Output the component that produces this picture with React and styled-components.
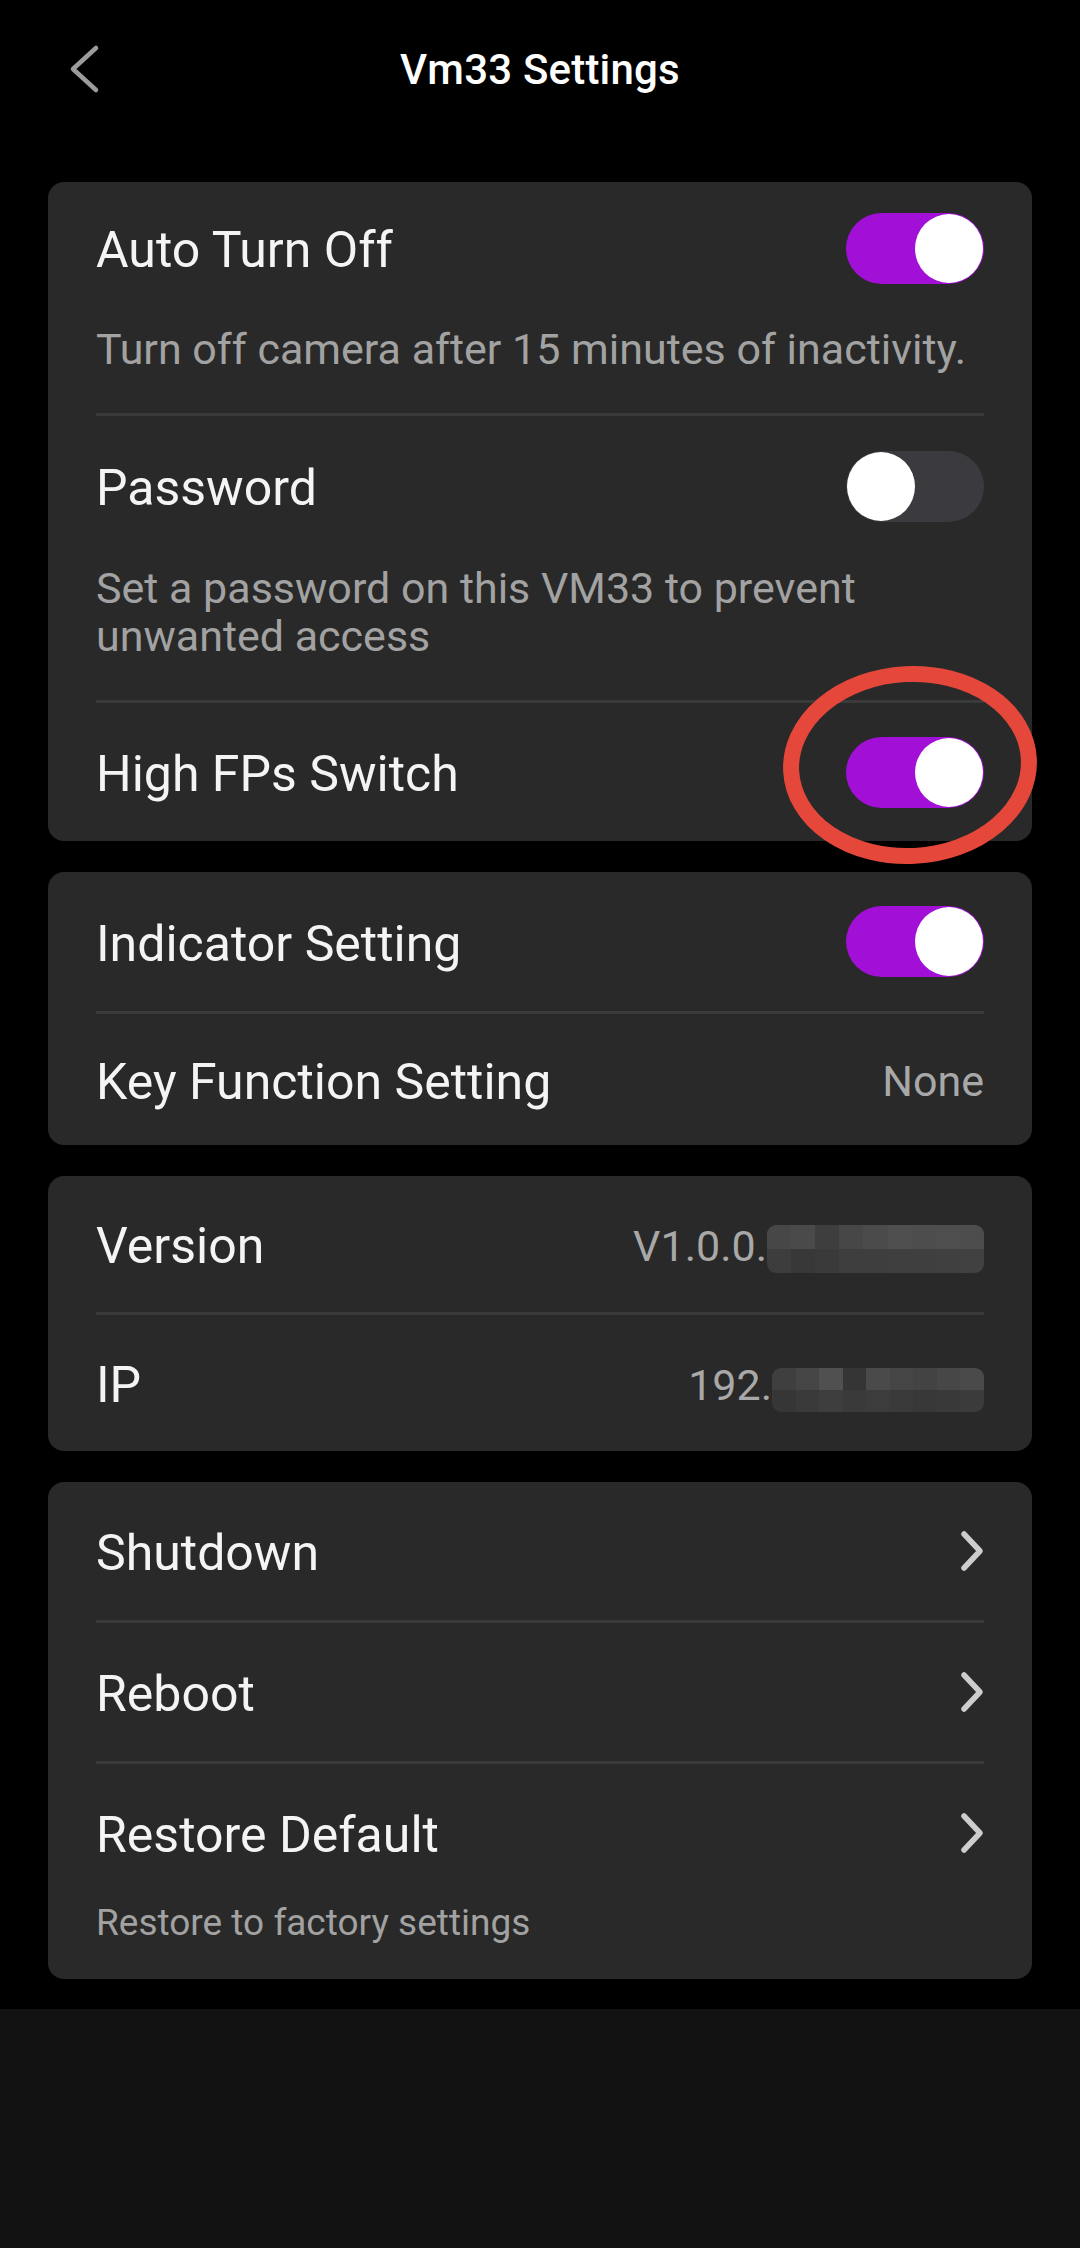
import React from "react";
import styled, { createGlobalStyle } from "styled-components";

const GlobalStyle = createGlobalStyle`
  html, body {
    margin: 0;
    padding: 0;
    background: #121212;
  }
  body {
    font-family: Roboto, "Noto Sans", "Liberation Sans", sans-serif;
    -webkit-font-smoothing: antialiased;
  }
  * { box-sizing: border-box; }
`;

const Screen = styled.div`
  width: 1080px;
  background: #000;
  padding: 0 48px 30px;
`;

const Header = styled.header`
  height: 138px;
  display: grid;
  grid-template-columns: 1fr auto 1fr;
  align-items: center;
`;

const BackButton = styled.button`
  justify-self: start;
  margin-left: 19px;
  width: 34px;
  height: 52px;
  padding: 0;
  border: 0;
  background: none;
  display: flex;
  align-items: center;
  justify-content: center;
  cursor: pointer;
`;

const Title = styled.h1`
  margin: 0;
  font-size: 42px;
  font-weight: 500;
  color: #ffffff;
  letter-spacing: 0.2px;
`;

const List = styled.main`
  margin-top: 44px;
  display: flex;
  flex-direction: column;
  gap: 31px;
`;

const Card = styled.section`
  background: #292929;
  border-radius: 16px;
  padding: 0 48px;
`;

const Item = styled.div`
  display: flex;
  flex-direction: column;
  padding-bottom: ${(p) => p.$pb || 0}px;
`;

const Row = styled.div`
  min-height: ${(p) => p.$h || 136}px;
  display: flex;
  align-items: center;
  justify-content: space-between;
  gap: 24px;
`;

const Label = styled.span`
  padding-top: 4px;
  font-size: 50px;
  color: #f4f4f4;
  font-weight: 400;
`;

const Desc = styled.p`
  margin: ${(p) => p.$mt}px 0 0;
  font-size: ${(p) => (p.$small ? 37 : 43)}px;
  line-height: ${(p) => (p.$small ? 42 : 48)}px;
  color: #a2a2a2;
  max-width: ${(p) => (p.$narrow ? 830 : 900)}px;
`;

const Divider = styled.hr`
  margin: 0;
  border: 0;
  height: 3px;
  background: #3a3a3a;
`;

const Value = styled.span`
  display: inline-flex;
  align-items: center;
  padding-top: 3px;
  font-size: 43px;
  color: #a8a8a8;
`;

const Mosaic = styled.span`
  display: inline-grid;
  grid-template-columns: repeat(${(p) => p.$cols}, 1fr);
  width: ${(p) => p.$w}px;
  height: ${(p) => p.$h}px;
  margin-top: ${(p) => p.$offset}px;
  border-radius: 9px;
  overflow: hidden;
`;

const Cell = styled.span`
  background: ${(p) => p.$c};
`;

const ToggleWrap = styled.div`
  position: relative;
  display: flex;
`;

const Track = styled.div`
  width: 138px;
  height: 71px;
  border-radius: 36px;
  background: ${(p) => (p.$on ? "#a20fd6" : "#3b3a3f")};
  display: flex;
  align-items: center;
  justify-content: ${(p) => (p.$on ? "flex-end" : "flex-start")};
  padding: 0 1px;
`;

const Knob = styled.div`
  width: 68px;
  height: 69px;
  border-radius: 50%;
  background: #ffffff;
`;

const Annotation = styled.svg`
  position: absolute;
  left: 50%;
  top: 50%;
  width: 262px;
  height: 210px;
  transform: translate(calc(-50% - 5px), calc(-50% - 7px));
  pointer-events: none;
  overflow: visible;
`;

const Chevron = () => (
  <svg width="24" height="42" viewBox="0 0 24 42" fill="none">
    <polyline
      points="4,4 20,21 4,38"
      stroke="#cdcdcd"
      strokeWidth="5.5"
      strokeLinecap="round"
      strokeLinejoin="round"
    />
  </svg>
);

const Toggle = ({ on, marked }) => (
  <ToggleWrap>
    <Track $on={on}>
      <Knob />
    </Track>
    {marked && (
      <Annotation viewBox="0 0 262 210">
        <ellipse
          cx="131"
          cy="105"
          rx="119"
          ry="91"
          stroke="#e5473a"
          strokeWidth="16"
          fill="none"
          transform="rotate(-3 131 105)"
        />
      </Annotation>
    )}
  </ToggleWrap>
);

const versionShades = [
  "#474747", "#4a4a4a", "#3e3e3e", "#474747", "#4b4b4b", "#4f4f4f", "#4d4d4d", "#4e4e4e", "#4d4d4d",
  "#3d3d3d", "#383838", "#3a3a3a", "#3e3e3e", "#3e3e3e", "#3f3f3f", "#3f3f3f", "#404040", "#414141",
];
const ipShades = [
  "#3f3f3f", "#454545", "#505050", "#353535", "#4a4a4a", "#454545", "#434343", "#474747", "#4a4a4a",
  "#363636", "#3a3a3a", "#3e3e3e", "#3a3a3a", "#3c3c3c", "#3a3a3a", "#383838", "#393939", "#3b3b3b",
];

const Blur = ({ shades, w, h, offset }) => (
  <Mosaic $cols={9} $w={w} $h={h} $offset={offset}>
    {shades.map((c, i) => (
      <Cell key={i} $c={c} />
    ))}
  </Mosaic>
);

export default function App() {
  return (
    <>
      <GlobalStyle />
      <Screen>
        <Header>
          <BackButton aria-label="Back">
            <svg width="32" height="50" viewBox="0 0 32 50" fill="none">
              <polyline
                points="28,4 5,25 28,46"
                stroke="#9c9c9c"
                strokeWidth="4.5"
                strokeLinecap="round"
                strokeLinejoin="round"
              />
            </svg>
          </BackButton>
          <Title>Vm33 Settings</Title>
          <span />
        </Header>

        <List>
          <Card>
            <Item $pb={40}>
              <Row $h={132}>
                <Label>Auto Turn Off</Label>
                <Toggle on />
              </Row>
              <Desc $mt={11}>Turn off camera after 15 minutes of inactivity.</Desc>
            </Item>
            <Divider />
            <Item $pb={40}>
              <Row $h={140}>
                <Label>Password</Label>
                <Toggle on={false} />
              </Row>
              <Desc $mt={8} $narrow>Set a password on this VM33 to prevent unwanted access</Desc>
            </Item>
            <Divider />
            <Item>
              <Row $h={138}>
                <Label>High FPs Switch</Label>
                <Toggle on marked />
              </Row>
            </Item>
          </Card>

          <Card>
            <Item>
              <Row $h={139}>
                <Label>Indicator Setting</Label>
                <Toggle on />
              </Row>
            </Item>
            <Divider />
            <Item>
              <Row $h={131}>
                <Label>Key Function Setting</Label>
                <Value>None</Value>
              </Row>
            </Item>
          </Card>

          <Card>
            <Item>
              <Row>
                <Label>Version</Label>
                <Value>
                  V1.0.0.
                  <Blur shades={versionShades} w={217} h={48} offset={6} />
                </Value>
              </Row>
            </Item>
            <Divider />
            <Item>
              <Row>
                <Label>IP</Label>
                <Value>
                  192.
                  <Blur shades={ipShades} w={212} h={44} offset={10} />
                </Value>
              </Row>
            </Item>
          </Card>

          <Card>
            <Item>
              <Row $h={138}>
                <Label>Shutdown</Label>
                <Chevron />
              </Row>
            </Item>
            <Divider />
            <Item>
              <Row $h={138}>
                <Label>Reboot</Label>
                <Chevron />
              </Row>
            </Item>
            <Divider />
            <Item $pb={35}>
              <Row $h={138}>
                <Label>Restore Default</Label>
                <Chevron />
              </Row>
              <Desc $mt={0} $small>Restore to factory settings</Desc>
            </Item>
          </Card>
        </List>
      </Screen>
    </>
  );
}
